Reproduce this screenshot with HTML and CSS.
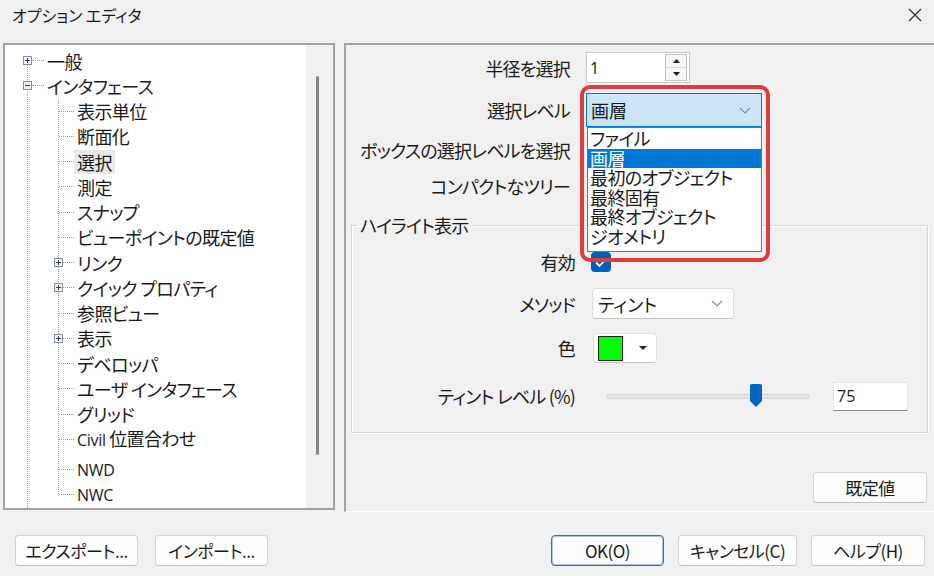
FILE: index.html
```html
<!DOCTYPE html>
<html lang="ja">
<head>
  <meta charset="UTF-8">
  <title>オプション エディタ</title>
  <link rel="stylesheet" href="styles.css">
</head>
<body>
  <div class="dialog">
    <div class="titlebar">
      <span class="title">オプション エディタ</span>
      <svg class="close" width="14" height="14" viewBox="0 0 14 14"><path d="M1 1L13 13M13 1L1 13" stroke="#333" stroke-width="1.3" fill="none"/></svg>
    </div>

    <div class="main">
      <!-- left: option tree -->
      <div class="tree-panel">
        <div class="tree">
          <div class="node">
            <svg class="exp" width="9" height="9" viewBox="0 0 9 9"><rect x="0.5" y="0.5" width="8" height="8" fill="#eef2f8" stroke="#8d8d8d"/><path d="M2 4.5h5M4.5 2v5" stroke="#24406e"/></svg>
            <span class="dots"></span><span class="label">一般</span>
          </div>
          <div class="node">
            <svg class="exp" width="9" height="9" viewBox="0 0 9 9"><rect x="0.5" y="0.5" width="8" height="8" fill="#eef2f8" stroke="#8d8d8d"/><path d="M2 4.5h5" stroke="#24406e"/></svg>
            <span class="dots"></span><span class="label">インタフェース</span>
          </div>
          <div class="branch">
            <div class="node sub"><span class="dots"></span><span class="label">表示単位</span></div>
            <div class="node sub"><span class="dots"></span><span class="label">断面化</span></div>
            <div class="node sub"><span class="dots"></span><span class="label selected">選択</span></div>
            <div class="node sub"><span class="dots"></span><span class="label">測定</span></div>
            <div class="node sub"><span class="dots"></span><span class="label">スナップ</span></div>
            <div class="node sub"><span class="dots"></span><span class="label">ビューポイントの既定値</span></div>
            <div class="node sub has-exp">
              <svg class="exp" width="9" height="9" viewBox="0 0 9 9"><rect x="0.5" y="0.5" width="8" height="8" fill="#eef2f8" stroke="#8d8d8d"/><path d="M2 4.5h5M4.5 2v5" stroke="#24406e"/></svg>
              <span class="dots"></span><span class="label">リンク</span>
            </div>
            <div class="node sub has-exp">
              <svg class="exp" width="9" height="9" viewBox="0 0 9 9"><rect x="0.5" y="0.5" width="8" height="8" fill="#eef2f8" stroke="#8d8d8d"/><path d="M2 4.5h5M4.5 2v5" stroke="#24406e"/></svg>
              <span class="dots"></span><span class="label">クイック プロパティ</span>
            </div>
            <div class="node sub"><span class="dots"></span><span class="label">参照ビュー</span></div>
            <div class="node sub has-exp">
              <svg class="exp" width="9" height="9" viewBox="0 0 9 9"><rect x="0.5" y="0.5" width="8" height="8" fill="#eef2f8" stroke="#8d8d8d"/><path d="M2 4.5h5M4.5 2v5" stroke="#24406e"/></svg>
              <span class="dots"></span><span class="label">表示</span>
            </div>
            <div class="node sub"><span class="dots"></span><span class="label">デベロッパ</span></div>
            <div class="node sub"><span class="dots"></span><span class="label">ユーザ インタフェース</span></div>
            <div class="node sub"><span class="dots"></span><span class="label">グリッド</span></div>
            <div class="node sub"><span class="dots"></span><span class="label"><span class="latin">Civil</span> 位置合わせ</span></div>
            <div class="node sub gap"><span class="dots"></span><span class="label latin">NWD</span></div>
            <div class="node sub"><span class="dots"></span><span class="label latin">NWC</span></div>
          </div>
        </div>
        <div class="scrollbar"><div class="thumb"></div></div>
      </div>

      <!-- right: selection page -->
      <div class="page-panel">
        <div class="frow r1">
          <span class="lbl">半径を選択</span>
          <div class="spin">
            <span>1</span>
            <div class="spin-btns">
              <div class="spin-half"><svg width="7" height="4" viewBox="0 0 7 4"><path d="M0 4L3.5 0L7 4Z" fill="#222"/></svg></div>
              <div class="spin-half"><svg width="7" height="4" viewBox="0 0 7 4"><path d="M0 0H7L3.5 4Z" fill="#222"/></svg></div>
            </div>
          </div>
        </div>
        <div class="frow r2">
          <span class="lbl">選択レベル</span>
          <div class="combo open">
            <span>画層</span>
            <svg width="12" height="7" viewBox="0 0 12 7"><path d="M1 1l5 5 5-5" stroke="#8c8c8c" stroke-width="1.2" fill="none"/></svg>
          </div>
        </div>
        <div class="frow r3"><span class="lbl">ボックスの選択レベルを選択</span></div>
        <div class="frow r4"><span class="lbl">コンパクトなツリー</span></div>

        <fieldset class="group">
          <legend>ハイライト表示</legend>
          <div class="grow g1">
            <span class="lbl">有効</span>
            <svg width="20" height="20" viewBox="0 0 20 20"><rect width="20" height="20" rx="4" fill="#005fb8"/><path d="M5 10.5l3.5 3.5L15 7" stroke="#fff" stroke-width="1.8" fill="none"/></svg>
          </div>
          <div class="grow g2">
            <span class="lbl">メソッド</span>
            <div class="combo method">
              <span>ティント</span>
              <svg width="12" height="7" viewBox="0 0 12 7"><path d="M1 1l5 5 5-5" stroke="#8c8c8c" stroke-width="1.2" fill="none"/></svg>
            </div>
          </div>
          <div class="grow g3">
            <span class="lbl">色</span>
            <div class="color-btn">
              <span class="swatch"></span>
              <svg width="8" height="4" viewBox="0 0 8 4"><path d="M0 0H8L4 4Z" fill="#222"/></svg>
            </div>
          </div>
          <div class="grow g4">
            <span class="lbl">ティント レベル (%)</span>
            <div class="slider">
              <div class="track"></div>
              <svg class="knob" width="14" height="24" viewBox="0 0 14 24"><path d="M1 2Q1 0 3 0H11Q13 0 13 2V17L7 23L1 17Z" fill="#0067c0"/></svg>
            </div>
            <div class="numbox">75</div>
          </div>
        </fieldset>

        <div class="defaults"><button class="btn w114">既定値</button></div>

        <div class="popup">
          <div class="item">ファイル</div>
          <div class="item active">画層</div>
          <div class="item">最初のオブジェクト</div>
          <div class="item">最終固有</div>
          <div class="item">最終オブジェクト</div>
          <div class="item">ジオメトリ</div>
        </div>
        <div class="mark"></div>
      </div>
    </div>

    <div class="footer">
      <button class="btn w123">エクスポート...</button>
      <button class="btn w113">インポート...</button>
      <div class="right-btns">
        <button class="btn w113 default">OK(O)</button>
        <button class="btn w119">キャンセル(C)</button>
        <button class="btn w114">ヘルプ(H)</button>
      </div>
    </div>
  </div>
</body>
</html>
```

FILE: styles.css
```css
* {
  box-sizing: border-box;
}
html, body {
  margin: 0;
  padding: 0;
}
body {
  width: 934px;
  height: 576px;
  overflow: hidden;
  background-color: #f0f0f0;
  font-family: "Noto Sans CJK JP", sans-serif;
  font-feature-settings: "palt";
  font-size: 18px;
  color: #1a1a1a;
}
.dialog {
  width: 934px;
  height: 576px;
  display: flex;
  flex-direction: column;
}
.titlebar {
  height: 30px;
  padding: 0 12px;
  display: flex;
  align-items: center;
  justify-content: space-between;
  font-size: 16px;
}
.main {
  display: flex;
  align-items: flex-start;
  margin-top: 13px;
  height: 469px;
}

/* tree */
.tree-panel {
  flex: none;
  margin-left: 3px;
  width: 332px;
  height: 467px;
  border: 2px solid #a2a2a2;
  background: #fff;
  display: flex;
}
.tree {
  flex: 1;
  position: relative;
  padding-top: 3px;
}
.tree::before {
  content: "";
  position: absolute;
  left: 22px;
  top: 15px;
  bottom: 0;
  border-left: 1px dotted #9a9a9a;
}
.node {
  display: flex;
  align-items: center;
  height: 25.25px;
  padding-left: 18px;
}
.node.gap {
  margin-top: 5px;
}
.exp {
  flex: none;
  position: relative;
  z-index: 1;
}
.dots {
  flex: none;
  width: 12px;
  border-top: 1px dotted #9a9a9a;
}
.label {
  padding: 0 3px;
  line-height: 24px;
  white-space: nowrap;
  letter-spacing: -0.6px;
}
.label.selected {
  background: #e8e8e8;
}
.latin {
  font-family: "Open Sans", "Noto Sans", sans-serif;
  font-size: 16px;
  letter-spacing: -0.3px;
}
.branch {
  position: relative;
}
.branch::before {
  content: "";
  position: absolute;
  left: 53px;
  top: 0;
  bottom: 12px;
  border-left: 1px dotted #9a9a9a;
}
.node.sub {
  padding-left: 54px;
}
.node.sub .dots {
  width: 15px;
}
.node.sub.has-exp {
  padding-left: 49px;
}
.node.sub.has-exp .dots {
  width: 11px;
}
.scrollbar {
  width: 27px;
  background: #f0f0f0;
}
.thumb {
  width: 3px;
  height: 379px;
  margin: 31px 0 0 10px;
  background: #858585;
  border-radius: 2px;
}

/* right page */
.page-panel {
  flex: none;
  position: relative;
  margin-left: 9px;
  width: 590px;
  height: 469px;
  border-top: 2px solid #a2a2a2;
  border-left: 2px solid #a2a2a2;
  border-bottom: 1px solid #fff;
  padding-top: 7px;
}
.frow {
  display: flex;
  align-items: center;
}
.frow .lbl,
.grow .lbl {
  letter-spacing: -0.8px;
}
.frow .lbl {
  flex: none;
  width: 224px;
  margin-right: 16px;
  text-align: right;
}
.r1 { height: 31px; }
.r2 { height: 34px; margin-top: 10px; }
.r3 { height: 34px; margin-top: 6px; }
.r4 { height: 30px; margin-top: 4px; }

.spin {
  width: 104px;
  height: 31px;
  background: #fff;
  border: 1px solid #c8c8c8;
  padding-left: 3px;
  display: flex;
  align-items: center;
  font-family: "Open Sans", sans-serif;
  font-size: 16px;
}
.spin-btns {
  margin-left: auto;
  margin-right: 2px;
  width: 22px;
  height: 27px;
  border: 1px solid #c4c4c4;
  display: flex;
  flex-direction: column;
}
.spin-half {
  flex: 1;
  display: flex;
  align-items: center;
  justify-content: center;
  background: #f6f6f6;
}
.spin-half + .spin-half {
  border-top: 1px solid #d4d4d4;
}
.combo {
  display: flex;
  align-items: center;
  justify-content: space-between;
  padding: 0 10px 0 4px;
}
.combo.open {
  width: 176px;
  height: 34px;
  background: #cce4f7;
  border: 1px solid #0078d7;
}
.combo.method {
  width: 142px;
  height: 31px;
  padding-left: 5px;
  background: #fff;
  border: 1px solid #dedede;
  border-bottom-color: #c2c2c2;
  border-radius: 4px;
}

/* highlight group */
.group {
  margin: 13px 6px 0 5px;
  padding: 14px 0 21px 0;
  border: 1px solid #d6d6d6;
  box-shadow: inset 1px 1px 0 #fff, 1px 1px 0 #fff;
  min-width: 0;
}
.group legend {
  margin-left: 5px;
  padding: 0 3px;
  line-height: 22px;
  letter-spacing: -0.8px;
}
.grow {
  display: flex;
  align-items: center;
}
.grow .lbl {
  flex: none;
  width: 223px;
  margin-right: 16px;
  text-align: right;
}
.g1 { height: 24px; }
.g2 { height: 31px; margin-top: 14px; }
.g3 { height: 30px; margin-top: 14px; }
.g4 { height: 30px; margin-top: 18px; }
.g2 .combo { margin-left: 1px; }
.color-btn {
  margin-left: 2px;
  width: 64px;
  height: 30px;
  background: #fff;
  border: 1px solid #dedede;
  border-bottom-color: #c2c2c2;
  border-radius: 4px;
  display: flex;
  align-items: center;
  padding-left: 4px;
}
.swatch {
  width: 25px;
  height: 25px;
  background: #00ff00;
  border: 1px solid #1e1e1e;
  margin-right: 16px;
}
.slider {
  position: relative;
  margin-left: 15px;
  width: 204px;
  height: 24px;
  display: flex;
  align-items: center;
}
.track {
  width: 100%;
  height: 5px;
  background: #e4e4e4;
  border: 1px solid #d6d6d6;
  border-radius: 2px;
}
.knob {
  position: absolute;
  left: 143px;
  top: 0;
}
.numbox {
  margin-left: 23px;
  width: 75px;
  height: 29px;
  background: #fff;
  border: 1px solid #e2e2e2;
  border-bottom: 1px solid #8a8a8a;
  padding-left: 3px;
  line-height: 27px;
  font-family: "Open Sans", sans-serif;
  font-size: 16px;
}
.defaults {
  display: flex;
  justify-content: flex-end;
  margin: 39px 7px 0 0;
}

/* open dropdown + red annotation */
.popup {
  position: absolute;
  left: 241px;
  top: 82px;
  width: 175px;
  height: 125px;
  background: #fff;
  border: 1px solid #3d7ebf;
  padding-top: 1px;
}
.item {
  height: 19.5px;
  line-height: 19.5px;
  padding-left: 2px;
  white-space: nowrap;
  letter-spacing: -0.6px;
}
.item.active {
  background: #0078d7;
  color: #fff;
}
.mark {
  position: absolute;
  left: 234px;
  top: 40px;
  width: 190px;
  height: 177px;
  border: 4px solid #e23b3b;
  border-radius: 10px;
}

/* buttons */
.btn {
  height: 31px;
  padding: 0;
  font-family: inherit;
  font-feature-settings: "palt";
  font-size: 17px;
  letter-spacing: -0.5px;
  color: #1a1a1a;
  background: #fdfdfd;
  border: 1px solid #d3d3d3;
  border-bottom-color: #bdbdbd;
  border-radius: 4px;
}
.btn.default {
  border-color: #3f6f9a;
  box-shadow: inset 0 0 0 1px #a9c3da;
}
.w113 { width: 113px; }
.w114 { width: 114px; }
.w119 { width: 119px; }
.w123 { width: 123px; }
.footer {
  display: flex;
  align-items: center;
  gap: 17px;
  padding: 23px 9px 0 15px;
}
.right-btns {
  margin-left: auto;
  display: flex;
  gap: 14px;
}
```
